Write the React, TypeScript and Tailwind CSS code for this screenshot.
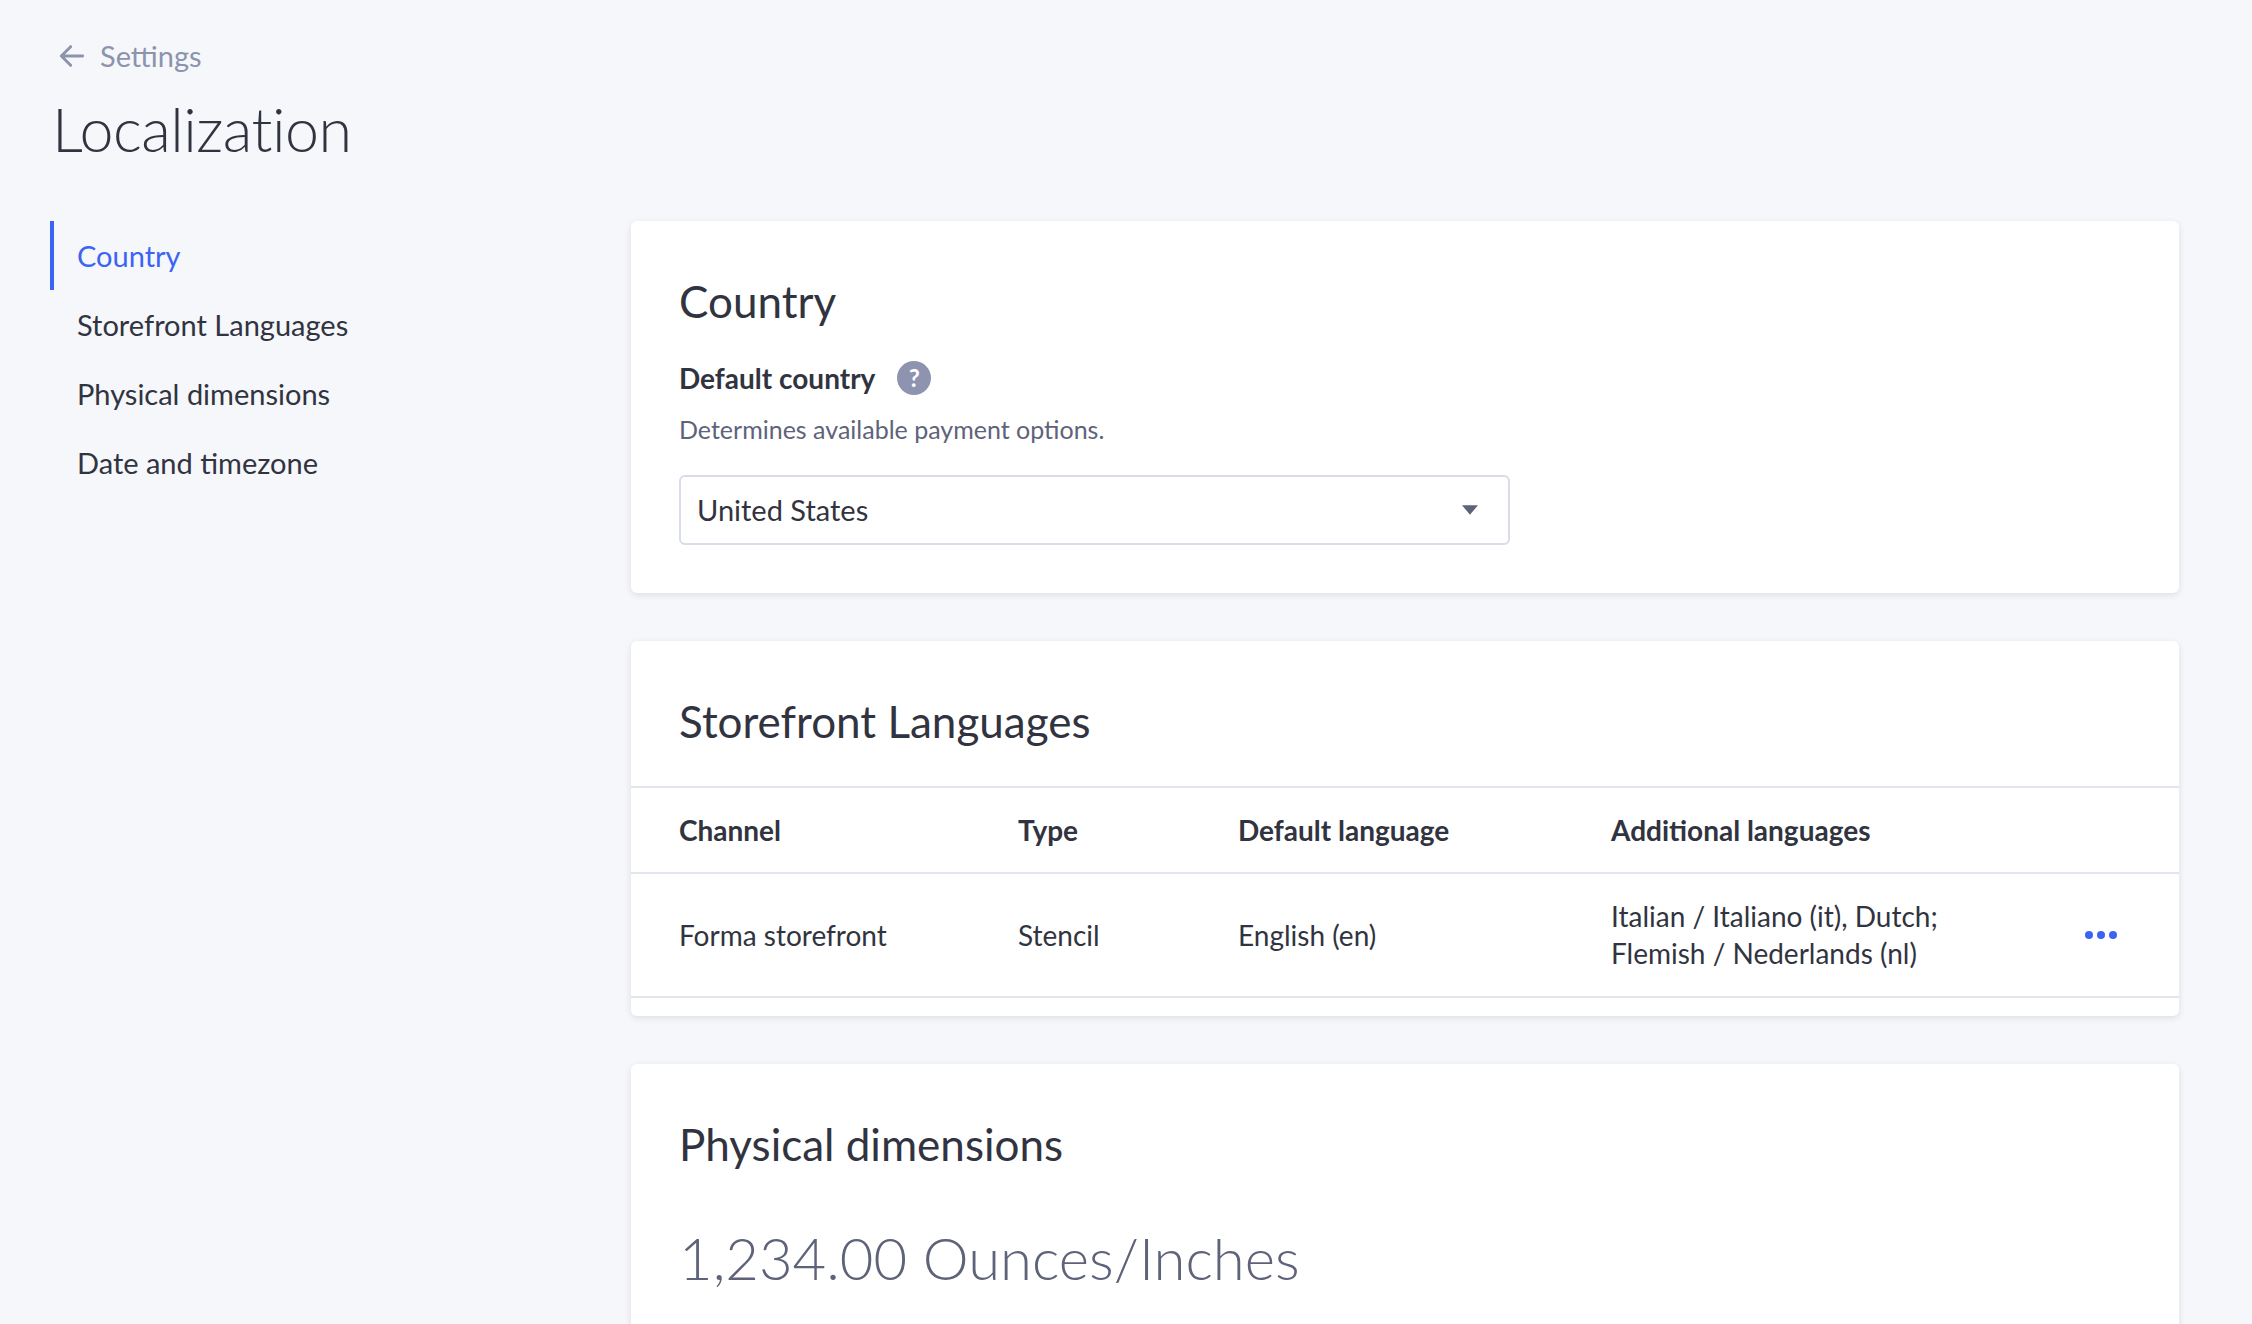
const font = { fontFamily: "Lato, 'Open Sans', sans-serif" };

function Card({ children, className = "" }: { children: React.ReactNode; className?: string }) {
  return (
    <div className={`bg-white rounded-md shadow-[0_2px_6px_rgba(49,52,64,0.12)] ${className}`}>{children}</div>
  );
}

export default function App() {
  const nav = ["Country", "Storefront Languages", "Physical dimensions", "Date and timezone"];
  return (
    <div style={font} className="min-h-screen h-[1324px] overflow-hidden bg-[#f5f7fa] text-[#313440]">
      <div className="pl-[52px] pt-[36px]">
        <div className="flex items-center gap-[12px] pl-[4px] text-[#8c93ad] text-[29px] h-[40px]">
          <svg width="32" height="32" viewBox="0 0 24 24" fill="none" stroke="currentColor" strokeWidth="2.2" strokeLinecap="round" strokeLinejoin="round">
            <path d="M20 12H4M11 5l-7 7 7 7" />
          </svg>
          <span>Settings</span>
        </div>
        <h1 className="text-[61px] font-light leading-none mt-[22px] tracking-[-0.5px]">Localization</h1>
      </div>
      <div className="flex pl-[50px] mt-[62px] gap-[0px]">
        <nav className="w-[581px] shrink-0 flex flex-col">
          {nav.map((n, i) => (
            <div
              key={n}
              className={`h-[69px] flex items-center pl-[23px] text-[29px] border-l-[4px] ${
                i === 0 ? "border-[#3c64f4] text-[#3c64f4]" : "border-transparent"
              }`}
            >
              {n}
            </div>
          ))}
        </nav>
        <div className="w-[1548px] flex flex-col gap-[48px]">
          <Card className="px-[48px] pt-[50px] pb-[48px]">
            <h2 className="text-[44px] leading-[60px]">Country</h2>
            <div className="flex items-center gap-[22px] mt-[26px]">
              <span className="text-[28px] font-bold">Default country</span>
              <span className="w-[34px] h-[34px] rounded-full bg-[#8e93b0] text-white flex items-center justify-center text-[24px] font-bold">?</span>
            </div>
            <p className="text-[25px] text-[#5e637a] mt-[12px]">Determines available payment options.</p>
            <div className="mt-[26px] w-[831px] h-[70px] border-2 border-[#d9dce9] rounded-md flex items-center justify-between px-[16px]">
              <span className="text-[29px]">United States</span>
              <svg width="16" height="12" viewBox="0 0 10 6" className="mr-[14px]"><path d="M0 0h10L5 6z" fill="#5e637a" /></svg>
            </div>
          </Card>
          <Card className="pb-[18px]">
            <h2 className="text-[44px] leading-[60px] px-[48px] pt-[50px] pb-[35px]">Storefront Languages</h2>
            <div className="grid grid-cols-[339px_220px_373px_1fr_120px] border-t-2 border-b-2 border-[#e3e5ee] h-[88px] items-center px-[48px] text-[28px] font-bold">
              <span>Channel</span><span>Type</span><span>Default language</span><span>Additional languages</span><span />
            </div>
            <div className="grid grid-cols-[339px_220px_373px_1fr_120px] border-b-2 border-[#e3e5ee] h-[124px] items-center px-[48px] text-[28px]">
              <span>Forma storefront</span>
              <span>Stencil</span>
              <span>English (en)</span>
              <span className="leading-[37px]">Italian / Italiano (it), Dutch;<br />Flemish / Nederlands (nl)</span>
              <span className="flex justify-end pr-[14px] gap-[4px]">
                {[0, 1, 2].map((d) => (
                  <span key={d} className="w-[8px] h-[8px] rounded-full bg-[#3c64f4]" />
                ))}
              </span>
            </div>
          </Card>
          <Card className="px-[48px] pt-[50px] h-[400px]">
            <h2 className="text-[44px] leading-[60px]">Physical dimensions</h2>
            <p className="text-[58px] font-light text-[#5e637a] mt-[40px]">1,234.00 Ounces/Inches</p>
          </Card>
        </div>
      </div>
    </div>
  );
}
